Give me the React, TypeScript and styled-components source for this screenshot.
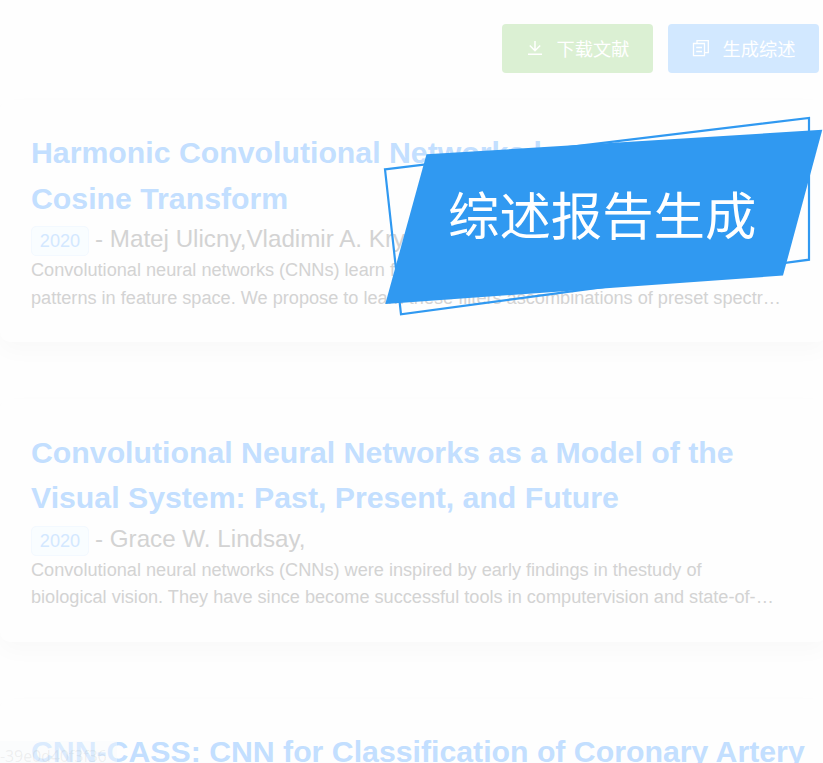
import React from "react";
import styled, { createGlobalStyle } from "styled-components";

const GlobalStyle = createGlobalStyle`
  html, body { margin: 0; height: 763px; overflow: hidden; background: #fefefe; }
  * { box-sizing: border-box; }
`;

const Page = styled.div`
  position: relative;
  width: 823px;
  height: 763px;
  overflow: hidden;
  background: #fefefe;
  font-family: "Liberation Sans", "Noto Sans CJK SC", sans-serif;
`;

const Toolbar = styled.header`
  display: flex;
  justify-content: flex-end;
  gap: 15px;
  height: 99.5px;
  padding: 24px 4px 0 0;
`;

const ActionButton = styled.button<{ $color: string }>`
  display: flex;
  align-items: center;
  justify-content: center;
  gap: 13px;
  width: 151px;
  height: 49px;
  padding: 0;
  border: 0;
  border-radius: 4px;
  background: ${(p) => p.$color};
  color: #fff;
  font: 400 18.2px/1 "Noto Sans CJK SC", sans-serif;
  svg { display: block; flex: none; margin-top: -1px; }
`;

const ActionLabel = styled.span`
  margin-top: -1px;
`;

const CardList = styled.main`
  display: flex;
  flex-direction: column;
  gap: 57px;
`;

const Card = styled.article`
  flex: none;
  height: 242.6px;
  margin-right: -4px;
  padding: 30.8px 0 0 31px;
  border-radius: 10px;
  background: #fefefe;
  box-shadow: 0 9px 22px rgba(0, 0, 0, 0.025);
  white-space: nowrap;
`;

const Title = styled.h2`
  margin: 0;
  font-size: 30.25px;
  line-height: 45.4px;
  color: #c3dfff;
`;

const Meta = styled.div`
  display: flex;
  align-items: center;
  height: 36px;
  gap: 6px;
`;

const YearTag = styled.span`
  width: 58px;
  height: 30px;
  margin-top: 4px;
  border: 1px solid #f3f9ff;
  border-radius: 5px;
  background: #f9fdff;
  color: #d3e8ff;
  font-size: 18.15px;
  line-height: 28px;
  text-align: center;
`;

const Authors = styled.span`
  color: #d3d3d3;
  font-size: 24.2px;
  line-height: 36px;
`;

const Abstract = styled.p`
  margin: 0;
  color: #d3d3d3;
  font-size: 18.15px;
  line-height: 27.4px;
`;

const Banner = styled.div`
  position: absolute;
  left: 383px;
  top: 115px;
  width: 440px;
  height: 202px;
  display: grid;
  svg, span { grid-area: 1 / 1; }
`;

const BannerLabel = styled.span`
  padding-left: 65px;
  color: #fff;
  font: 400 51.4px/195px "Noto Sans CJK SC", sans-serif;
  white-space: nowrap;
`;

const StatusHint = styled.div`
  position: absolute;
  left: 0;
  top: 741px;
  width: 117px;
  height: 22px;
  overflow: hidden;
  background: rgba(248, 250, 253, 0.45);
  color: rgba(120, 120, 120, 0.11);
  font: 400 16px/31px "Open Sans", sans-serif;
  letter-spacing: -0.1px;
  white-space: nowrap;
`;

const DownloadIcon = () => (
  <svg width="18" height="18" viewBox="0 0 18 18" fill="none" stroke="#fff" strokeWidth="1.5">
    <path d="M9 2v10M3.8 6.5 9 11.7l5.2-5.2M2 15.3h14" />
  </svg>
);

const CopyIcon = () => (
  <svg width="18" height="18" viewBox="0 0 18 18" fill="none" stroke="#fff" strokeWidth="1.3">
    <path d="M1.5 4.5h11v12.2h-11zM5 4.5V1.7h11.3v12h-3.8M4.2 8.5H10M4.2 12.5H10" />
  </svg>
);

const papers = [
  {
    title: ["Harmonic Convolutional Networks based on Discrete", "Cosine Transform"],
    authors: "Matej Ulicny,Vladimir A. Krylov,Rozenn Dahyot,",
    abstract: [
      "Convolutional neural networks (CNNs) learn filters in order to capture local",
      "patterns in feature space. We propose to learn these filters ascombinations of preset spectr…",
    ],
  },
  {
    title: ["Convolutional Neural Networks as a Model of the", "Visual System: Past, Present, and Future"],
    authors: "Grace W. Lindsay,",
    abstract: [
      "Convolutional neural networks (CNNs) were inspired by early findings in thestudy of",
      "biological vision. They have since become successful tools in computervision and state-of-…",
    ],
  },
  { title: ["CNN-CASS: CNN for Classification of Coronary Artery"], authors: "", abstract: [] },
];

const Lines = ({ items }: { items: string[] }) => (
  <>
    {items.map((t) => (
      <React.Fragment key={t}>
        {t}
        <br />
      </React.Fragment>
    ))}
  </>
);

export default function App() {
  return (
    <Page>
      <GlobalStyle />
      <Toolbar>
        <ActionButton $color="#dbf0d3"><DownloadIcon /><ActionLabel>下载文献</ActionLabel></ActionButton>
        <ActionButton $color="#d2e8ff"><CopyIcon /><ActionLabel>生成综述</ActionLabel></ActionButton>
      </Toolbar>
      <CardList>
        {papers.map((p) => (
          <Card key={p.title[0]}>
            <Title><Lines items={p.title} /></Title>
            {p.authors && (
              <Meta>
                <YearTag>2020</YearTag>
                <Authors>- {p.authors}</Authors>
              </Meta>
            )}
            <Abstract><Lines items={p.abstract} /></Abstract>
          </Card>
        ))}
      </CardList>
      <Banner>
        <svg width="440" height="202" viewBox="383 115 440 202">
          <path d="M385 169.3 809 118v141.7L401 314.3z" fill="none" stroke="#3099f1" strokeWidth="2.2" />
          <path d="M426.5 154.3 822.3 129.8 783 275.6 385.3 304z" fill="#3099f1" />
        </svg>
        <BannerLabel>综述报告生成</BannerLabel>
      </Banner>
      <StatusHint>-39e0d40f3f36</StatusHint>
    </Page>
  );
}
